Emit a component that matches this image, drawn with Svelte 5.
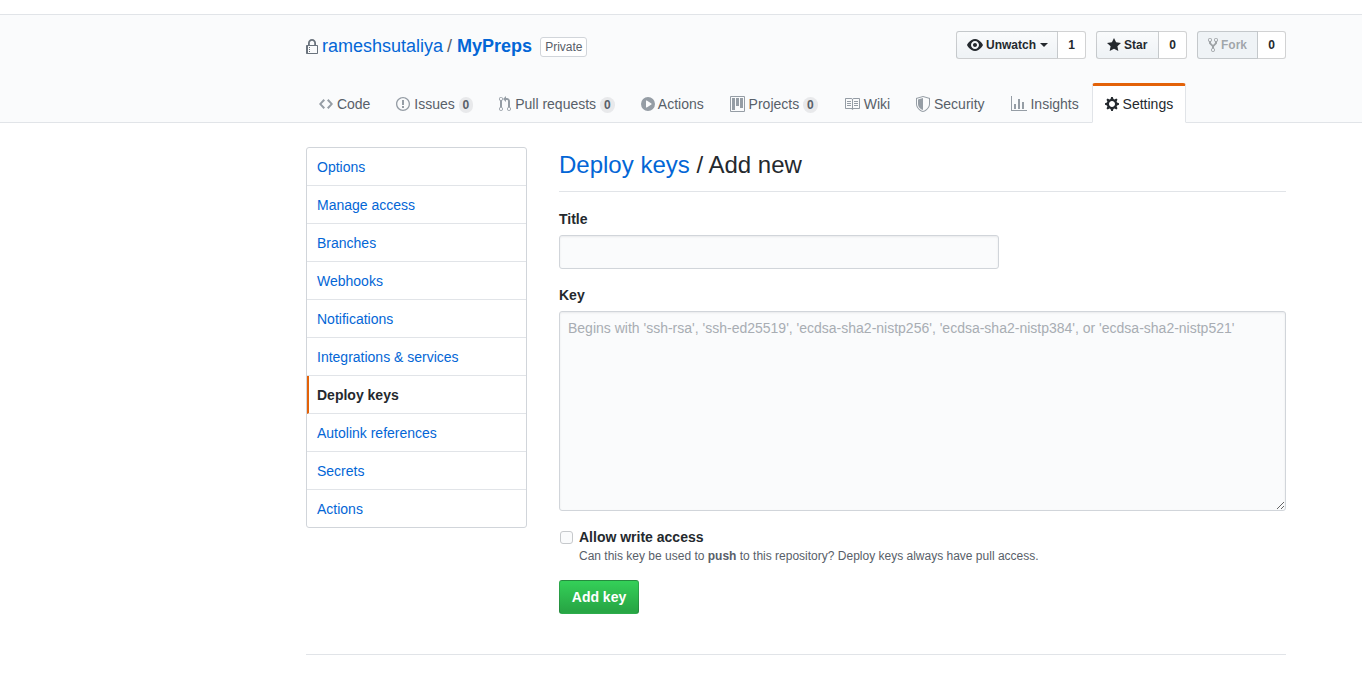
<script>
    const icons = {
        lock: { w: 12, d: 'M4 13H3v-1h1v1zm8-6v7c0 .55-.45 1-1 1H1c-.55 0-1-.45-1-1V7c0-.55.45-1 1-1h1V4c0-2.2 1.8-4 4-4s4 1.8 4 4v2h1c.55 0 1 .45 1 1zM3.8 6h4.41V4c0-1.22-.98-2.2-2.2-2.2-1.22 0-2.2.98-2.2 2.2v2H3.8zM11 7H2v7h9V7zM4 8H3v1h1V8zm0 2H3v1h1v-1z' },
        eye: { w: 16, d: 'M8.06 2C3 2 0 8 0 8s3 6 8.06 6C13 14 16 8 16 8s-3-6-7.94-6zM8 12c-2.2 0-4-1.78-4-4 0-2.2 1.8-4 4-4 2.22 0 4 1.8 4 4 0 2.22-1.78 4-4 4zm2-4c0 1.11-.89 2-2 2-1.11 0-2-.89-2-2 0-1.11.89-2 2-2 1.11 0 2 .89 2 2z' },
        star: { w: 14, d: 'M14 6l-4.9-.64L7 1 4.9 5.36 0 6l3.6 3.26L2.67 14 7 11.67 11.33 14l-.93-4.74L14 6z' },
        fork: { w: 10, d: 'M8 1a1.993 1.993 0 0 0-1 3.72V6L5 8 3 6V4.72A1.993 1.993 0 0 0 2 1a1.993 1.993 0 0 0-1 3.72V6.5l3 3v1.78A1.993 1.993 0 0 0 5 15a1.993 1.993 0 0 0 1-3.72V9.5l3-3V4.72A1.993 1.993 0 0 0 8 1zM2 4.2C1.34 4.2.8 3.65.8 3c0-.65.55-1.2 1.2-1.2.65 0 1.2.55 1.2 1.2 0 .65-.55 1.2-1.2 1.2zm3 10c-.66 0-1.2-.55-1.2-1.2 0-.65.55-1.2 1.2-1.2.65 0 1.2.55 1.2 1.2 0 .65-.55 1.2-1.2 1.2zm3-10c-.66 0-1.2-.55-1.2-1.2 0-.65.55-1.2 1.2-1.2.65 0 1.2.55 1.2 1.2 0 .65-.55 1.2-1.2 1.2z' },
        code: { w: 14, d: 'M9.5 3L8 4.5 11.5 8 8 11.5 9.5 13 14 8 9.5 3zm-5 0L0 8l4.5 5L6 11.5 2.5 8 6 4.5 4.5 3z' },
        issue: { w: 14, d: 'M7 2.3c3.14 0 5.7 2.56 5.7 5.7s-2.56 5.7-5.7 5.7A5.71 5.71 0 0 1 1.3 8c0-3.14 2.56-5.7 5.7-5.7zM7 1C3.14 1 0 4.14 0 8s3.14 7 7 7 7-3.14 7-7-3.14-7-7-7zm1 3H6v5h2V4zm0 6H6v2h2v-2z' },
        pull: { w: 12, d: 'M11 11.28V5c-.03-.78-.34-1.47-.94-2.06C9.46 2.35 8.78 2.03 8 2H7V0L4 3l3 3V4h1c.27.02.48.11.69.31.21.2.3.42.31.69v6.28A1.993 1.993 0 0 0 10 15a1.993 1.993 0 0 0 1-3.72zm-1 2.92c-.66 0-1.2-.55-1.2-1.2 0-.65.55-1.2 1.2-1.2.65 0 1.2.55 1.2 1.2 0 .65-.55 1.2-1.2 1.2zM4 3c0-1.11-.89-2-2-2a1.993 1.993 0 0 0-1 3.72v6.56A1.993 1.993 0 0 0 2 15a1.993 1.993 0 0 0 1-3.72V4.72c.59-.34 1-.98 1-1.72zm-.8 10c0 .66-.55 1.2-1.2 1.2-.65 0-1.2-.55-1.2-1.2 0-.65.55-1.2 1.2-1.2.65 0 1.2.55 1.2 1.2zM2 4.2C1.34 4.2.8 3.65.8 3c0-.65.55-1.2 1.2-1.2.65 0 1.2.55 1.2 1.2 0 .65-.55 1.2-1.2 1.2z' },
        play: { w: 14, d: 'M14 8A7 7 0 1 1 0 8a7 7 0 0 1 14 0zm-8.223 3.482l4.599-3.066a.5.5 0 0 0 0-.832L5.777 4.518A.5.5 0 0 0 5 4.934v6.132a.5.5 0 0 0 .777.416z' },
        project: { w: 15, d: 'M10 12h3V2h-3v10zm-4-2h3V2H6v8zm-4 4h3V2H2v12zm-1 1h13V1H1v14zM14 0H1a1 1 0 0 0-1 1v14a1 1 0 0 0 1 1h13a1 1 0 0 0 1-1V1a1 1 0 0 0-1-1z' },
        book: { w: 16, d: 'M3 5h4v1H3V5zm0 3h4V7H3v1zm0 2h4V9H3v1zm11-5h-4v1h4V5zm0 2h-4v1h4V7zm0 2h-4v1h4V9zm2-6v9c0 .55-.45 1-1 1H9.5l-1 1-1-1H2c-.55 0-1-.45-1-1V3c0-.55.45-1 1-1h5.5l1 1 1-1H15c.55 0 1 .45 1 1zm-8 .5L7.5 3H2v9h6V3.5zm7-.5H9.5l-.5.5V12h6V3z' },
        shield: { w: 14, d: 'M0 2l7-2 7 2v6.02C14 12.69 8.69 16 7 16c-1.69 0-7-3.31-7-7.98V2zm1 .75L7 1l6 1.75v5.268C13 12.104 8.449 15 7 15c-1.449 0-6-2.896-6-6.982V2.75zm1 .75L7 2v12c-1.207 0-5-2.482-5-5.985V3.5z' },
        graph: { w: 16, d: 'M16 14v1H0V0h1v14h15zM5 13H3V8h2v5zm4 0H7V3h2v10zm4 0h-2V6h2v7z' },
        gear: { w: 14, d: 'M14 8.77v-1.6l-1.94-.64-.45-1.09.88-1.84-1.13-1.13-1.81.91-1.09-.45-.69-1.92h-1.6l-.63 1.94-1.11.45-1.84-.88-1.13 1.13.91 1.81-.45 1.09L0 7.23v1.59l1.94.64.45 1.09-.88 1.84 1.13 1.13 1.81-.91 1.09.45.69 1.92h1.59l.63-1.94 1.11-.45 1.84.88 1.13-1.13-.92-1.81.47-1.09L14 8.75v.02zM7 11c-1.66 0-3-1.34-3-3s1.34-3 3-3 3 1.34 3 3-1.34 3-3 3z' }
    };

    const tabs = [
        { label: 'Code', icon: 'code' },
        { label: 'Issues', icon: 'issue', count: 0 },
        { label: 'Pull requests', icon: 'pull', count: 0 },
        { label: 'Actions', icon: 'play' },
        { label: 'Projects', icon: 'project', count: 0 },
        { label: 'Wiki', icon: 'book' },
        { label: 'Security', icon: 'shield' },
        { label: 'Insights', icon: 'graph' },
        { label: 'Settings', icon: 'gear', selected: true }
    ];

    const menu = ['Options', 'Manage access', 'Branches', 'Webhooks', 'Notifications', 'Integrations & services', 'Deploy keys', 'Autolink references', 'Secrets', 'Actions'];
</script>

{#snippet octicon(name)}
    <svg class="octicon" viewBox="0 0 {icons[name].w} 16" width={icons[name].w} height="16" aria-hidden="true">
        <path fill-rule="evenodd" d={icons[name].d} />
    </svg>
{/snippet}

<div class="header-gap"></div>

<div class="pagehead">
    <div class="container repo-row">
        <h1 class="repo-title">
            <span class="lock">{@render octicon('lock')}</span>
            <a href="#owner">rameshsutaliya</a>
            <span class="slash">/</span>
            <a href="#repo"><strong>MyPreps</strong></a>
            <span class="private">Private</span>
        </h1>
        <ul class="actions">
            <li>
                <span class="btn watch">{@render octicon('eye')} Unwatch <i class="caret"></i></span><span class="social">1</span>
            </li>
            <li>
                <span class="btn star">{@render octicon('star')} Star</span><span class="social">0</span>
            </li>
            <li>
                <span class="btn fork disabled">{@render octicon('fork')} Fork</span><span class="social">0</span>
            </li>
        </ul>
    </div>
    <nav class="container tabs">
        {#each tabs as tab}
            <a class="tab" class:selected={tab.selected} href="#tab">
                {@render octicon(tab.icon)}
                {tab.label}
                {#if tab.count !== undefined}
                    <span class="counter">{tab.count}</span>
                {/if}
            </a>
        {/each}
    </nav>
</div>

<div class="container content">
    <ul class="menu">
        {#each menu as item}
            <li class:active={item === 'Deploy keys'}>{item}</li>
        {/each}
    </ul>
    <main class="main">
        <h2 class="subhead"><a href="#keys">Deploy keys</a> / Add new</h2>
        <label class="field-label" for="title">Title</label>
        <input id="title" class="title-input" type="text" />
        <label class="field-label key-label" for="key">Key</label>
        <textarea id="key" placeholder="Begins with 'ssh-rsa', 'ssh-ed25519', 'ecdsa-sha2-nistp256', 'ecdsa-sha2-nistp384', or 'ecdsa-sha2-nistp521'"></textarea>
        <div class="check">
            <input id="write" type="checkbox" />
            <div>
                <label for="write">Allow write access</label>
                <p class="note">Can this key be used to <strong>push</strong> to this repository? Deploy keys always have pull access.</p>
            </div>
        </div>
        <button class="add" type="button">Add key</button>
    </main>
</div>

<div class="container footer-rule"></div>

<style>
    :global(body) {
        background: #fff;
        color: #24292e;
        font-family: "Liberation Sans", Arial, sans-serif;
        font-size: 14px;
        line-height: 1.5;
    }

    a {
        color: #0366d6;
        text-decoration: none;
    }

    ul {
        list-style: none;
        margin: 0;
        padding: 0;
    }

    .octicon {
        display: inline-block;
        fill: currentColor;
        vertical-align: text-bottom;
    }

    .container {
        width: 980px;
        margin-left: 306px;
    }

    .header-gap {
        height: 14px;
    }

    .pagehead {
        background: #fafbfc;
        border-top: 1px solid #e1e4e8;
        border-bottom: 1px solid #e1e4e8;
        height: 91px;
        padding-top: 16px;
    }

    .repo-row {
        display: flex;
        justify-content: space-between;
        align-items: flex-start;
        height: 52px;
    }

    .repo-title {
        margin: 0;
        font-size: 18px;
        font-weight: 400;
        line-height: 30px;
        display: flex;
        align-items: center;
    }

    .lock {
        color: #6a737d;
        display: flex;
        margin: 2px 4px 0 0;
    }

    .slash {
        color: #586069;
        margin: 0 5px 0 4px;
    }

    .private {
        font-size: 12px;
        line-height: 18px;
        color: #586069;
        border: 1px solid #d1d5da;
        border-radius: 3px;
        padding: 0 4px;
        margin-left: 8px;
        margin-top: 2px;
        background: #fff;
    }

    .actions {
        display: flex;
        gap: 10px;
        font-size: 12px;
        font-weight: 600;
    }

    .actions li {
        display: flex;
    }

    .btn {
        display: flex;
        align-items: center;
        gap: 3px;
        height: 28px;
        box-sizing: border-box;
        padding-left: 10px;
        line-height: 20px;
        color: #24292e;
        font-weight: 700;
        background: linear-gradient(-180deg, #fafbfc, #eff3f6 90%);
        border: 1px solid rgba(27, 31, 35, 0.2);
        border-radius: 3px 0 0 3px;
    }

    .btn.watch {
        width: 102px;
    }

    .btn.star {
        width: 63px;
    }

    .btn.fork {
        width: 61px;
    }

    .btn .octicon {
        vertical-align: middle;
    }

    .btn.disabled {
        color: rgba(36, 41, 46, 0.4);
        background: #eff3f6;
        border-color: rgba(27, 31, 35, 0.2);
    }

    .caret {
        border: 4px solid transparent;
        border-top-color: currentColor;
        border-bottom-width: 0;
        margin-left: 1px;
    }

    .social {
        display: flex;
        align-items: center;
        justify-content: center;
        width: 28px;
        height: 28px;
        box-sizing: border-box;
        font-weight: 700;
        color: #24292e;
        background: #fff;
        border: 1px solid rgba(27, 31, 35, 0.2);
        border-left: 0;
        border-radius: 0 3px 3px 0;
    }

    .tabs {
        display: flex;
    }

    .tab {
        display: block;
        height: 39px;
        line-height: 21px;
        padding: 8px 12px 7px;
        box-sizing: border-box;
        color: #586069;
        white-space: nowrap;
        border: 1px solid transparent;
        border-top-width: 3px;
    }

    .tab .octicon {
        color: #959da5;
    }

    .tab.selected {
        height: 40px;
        color: #24292e;
        background: #fff;
        border-color: #e1e4e8;
        border-top-color: #e36209;
        border-bottom-color: #fff;
        border-radius: 3px 3px 0 0;
    }

    .tab.selected .octicon {
        color: #24292e;
    }

    .counter {
        display: inline-block;
        padding: 2px 4px;
        font-size: 12px;
        font-weight: 600;
        line-height: 1;
        color: #586069;
        background: rgba(27, 31, 35, 0.08);
        border-radius: 20px;
    }

    .content {
        display: flex;
        gap: 32px;
        padding-top: 24px;
    }

    .menu {
        width: 219px;
        height: 379px;
        flex: none;
        background: #fff;
        border: 1px solid #d1d5da;
        border-radius: 3px;
    }

    .menu li {
        height: 38px;
        box-sizing: border-box;
        padding: 9px 10px 7px;
        line-height: 21px;
        color: #0366d6;
        border-bottom: 1px solid #e1e4e8;
    }

    .menu li:last-child {
        border-bottom: 0;
    }

    .menu li.active {
        color: #24292e;
        font-weight: 600;
        border-left: 2px solid #e36209;
        padding-left: 8px;
    }

    .main {
        flex: 1;
        min-width: 0;
    }

    .subhead {
        margin: 0 0 17px;
        padding-bottom: 8px;
        font-size: 24px;
        font-weight: 400;
        line-height: 36px;
        border-bottom: 1px solid #e1e4e8;
    }

    .field-label {
        display: block;
        font-weight: 600;
        line-height: 21px;
        margin-bottom: 5px;
    }

    .key-label {
        margin-top: 16px;
    }

    .title-input,
    textarea {
        display: block;
        box-sizing: border-box;
        font: 14px/20px "Liberation Sans", Arial, sans-serif;
        color: #24292e;
        background: #fafbfc;
        border: 1px solid #d1d5da;
        border-radius: 3px;
        box-shadow: inset 0 1px 2px rgba(27, 31, 35, 0.075);
        padding: 6px 8px;
        margin: 0;
    }

    .title-input {
        width: 440px;
        height: 34px;
    }

    textarea {
        width: 727px;
        height: 200px;
    }

    textarea::placeholder {
        color: #a8adb3;
        opacity: 1;
    }

    .check {
        display: flex;
        margin-top: 16px;
    }

    .check input {
        appearance: none;
        box-sizing: border-box;
        width: 13px;
        height: 13px;
        margin: 4px 6px 0 1px;
        background: #fafbfc;
        border: 1px solid #c6c9cc;
        border-radius: 3px;
    }

    .check label {
        display: block;
        font-weight: 600;
        line-height: 21px;
    }

    .note {
        margin: -1px 0 0;
        font-size: 12px;
        line-height: 18px;
        color: #586069;
    }

    .add {
        display: block;
        margin-top: 15px;
        width: 80px;
        height: 34px;
        padding: 0;
        font: 700 14px/20px "Liberation Sans", Arial, sans-serif;
        color: #fff;
        background: linear-gradient(-180deg, #34d058, #28a745 90%);
        border: 1px solid rgba(27, 31, 35, 0.2);
        border-radius: 3px;
    }

    .footer-rule {
        margin-top: 40px;
        border-top: 1px solid #e1e4e8;
        height: 33px;
    }
</style>
